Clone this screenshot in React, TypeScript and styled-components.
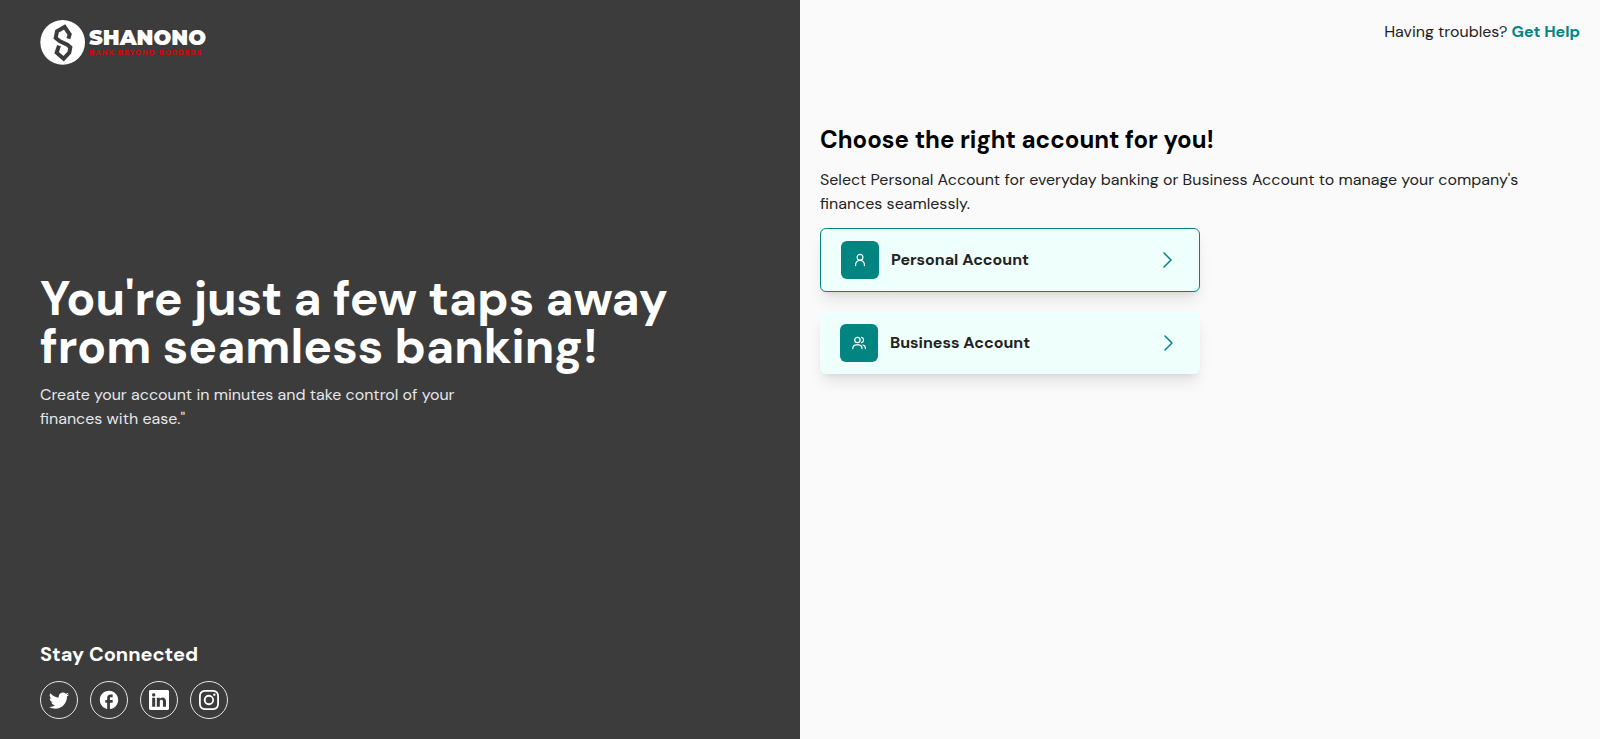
import React, { useState } from "react";
import styled, { createGlobalStyle } from "styled-components";
import { BsInstagram, BsLinkedin, BsTwitter } from "react-icons/bs";
import { MdFacebook } from "react-icons/md";

const teal = "#028581";

const GlobalStyle = createGlobalStyle`
  *, *::before, *::after { box-sizing: border-box; }
  body {
    margin: 0;
    background: #fafafa;
    color: #222;
    font-family: "DM Sans", Inter, "Liberation Sans", sans-serif;
    font-size: 16px;
    line-height: 24px;
  }
  h1, h2, h3, p, ul { margin: 0; padding: 0; }
`;

const Page = styled.div`
  display: grid;
  grid-template-columns: 1fr 1fr;
  min-height: 100vh;

  @media (max-width: 800px) {
    grid-template-columns: 1fr;
  }
`;

const Brand = styled.section`
  display: flex;
  flex-direction: column;
  justify-content: space-between;
  gap: 40px;
  padding: 20px 40px;
  background: #3c3c3c;
  color: #fff;
`;

const LogoLink = styled.a`
  display: flex;
  align-items: center;
  align-self: flex-start;
  gap: 4px;
  padding-bottom: 2px;
  color: #fff;
  text-decoration: none;
`;

const LogoText = styled.span`
  display: flex;
  flex-direction: column;
`;

const LogoName = styled.span`
  font-family: Montserrat, Inter, sans-serif;
  font-size: 21px;
  font-weight: 900;
  line-height: 20px;
`;

const LogoTagline = styled.span`
  color: #d40606;
  font-family: Montserrat, Inter, sans-serif;
  font-size: 7px;
  font-weight: 700;
  letter-spacing: 1px;
  line-height: 10px;
`;

const Hero = styled.div`
  display: flex;
  flex-direction: column;
  gap: 12px;
`;

const HeroTitle = styled.h1`
  font-size: 48px;
  font-weight: 700;
  line-height: 48px;
`;

const HeroText = styled.p`
  max-width: 450px;
  color: #e5e7eb;
`;

const Social = styled.div`
  display: flex;
  flex-direction: column;
  gap: 12px;
`;

const SocialTitle = styled.h3`
  font-size: 20px;
  font-weight: 700;
  line-height: 30px;
`;

const SocialList = styled.ul`
  display: flex;
  gap: 12px;
  list-style: none;
`;

const SocialLink = styled.a`
  display: flex;
  align-items: center;
  justify-content: center;
  width: 38px;
  height: 38px;
  border: 1px solid #e5e7eb;
  border-radius: 50%;
  color: #fff;
`;

const Content = styled.section`
  display: flex;
  flex-direction: column;
  gap: 80px;
  padding: 20px;
`;

const Help = styled.p`
  text-align: right;
`;

const HelpLink = styled.a`
  color: ${teal};
  font-weight: 700;
  text-decoration: none;
`;

const Chooser = styled.main`
  display: flex;
  flex-direction: column;
  gap: 12px;
`;

const ChooserTitle = styled.h2`
  color: #000;
  font-size: 24px;
  font-weight: 700;
  line-height: 32px;
`;

const AccountList = styled.div`
  display: flex;
  flex-direction: column;
  gap: 20px;
  width: 50%;
  min-width: 280px;
`;

const AccountCard = styled.button<{ $active: boolean }>`
  display: flex;
  align-items: center;
  gap: 12px;
  padding: 12px 20px;
  border: ${(p) => (p.$active ? `1px solid ${teal}` : "0")};
  border-radius: 6px;
  background: #effffc;
  box-shadow: 0 10px 15px -3px rgba(0, 0, 0, 0.1), 0 4px 6px -4px rgba(0, 0, 0, 0.1);
  color: #222;
  font: inherit;
  font-weight: 700;
  text-align: left;
  cursor: pointer;
`;

const AccountIcon = styled.span`
  display: flex;
  align-items: center;
  justify-content: center;
  width: 38px;
  height: 38px;
  border-radius: 6px;
  background: ${teal};
  color: #fff;
`;

const AccountName = styled.span`
  flex: 1;
`;

const LogoMark = () => (
  <svg width="45" height="45" viewBox="0 0 135 135" aria-hidden="true">
    <circle cx="68" cy="67" r="67" fill="#fff" />
    <path
      d="M85 56L89 43L74 21L51 34L47 54L60 64L82 74L91 82L88 98L71 116L50 98L57 77"
      fill="none"
      stroke="#3c3c3c"
      strokeWidth="12"
    />
  </svg>
);

const Chevron = () => (
  <svg width="24" height="24" viewBox="0 0 24 24" fill="none" stroke={teal} strokeWidth="1.5" strokeLinecap="round" strokeLinejoin="round" aria-hidden="true">
    <path d="M9 5l7 7-7 7" />
  </svg>
);

const PersonIcon = () => (
  <svg width="16" height="16" viewBox="0 0 16 16" fill="none" stroke="currentColor" strokeWidth="1.2" strokeLinecap="round" aria-hidden="true">
    <circle cx="8" cy="5.2" r="2.9" />
    <path d="M3.6 13.6v-.8a4.4 4.4 0 0 1 8.8 0v.8" />
  </svg>
);

const PeopleIcon = () => (
  <svg width="16" height="16" viewBox="0 0 16 16" fill="none" stroke="currentColor" strokeWidth="1.2" strokeLinecap="round" aria-hidden="true">
    <circle cx="6.4" cy="5" r="2.7" />
    <path d="M1.8 13.6v-.4a3.4 3.4 0 0 1 3.4-3.4h2.4a3.4 3.4 0 0 1 3.4 3.4v.4" />
    <path d="M10.6 2.4a2.7 2.7 0 0 1 0 5.2" />
    <path d="M12 10a3.3 3.3 0 0 1 2.4 3.2v.4" />
  </svg>
);

const accounts = [
  { id: "personal", name: "Personal Account", Icon: PersonIcon },
  { id: "business", name: "Business Account", Icon: PeopleIcon },
];

const networks = [
  { name: "Twitter", Icon: BsTwitter, size: 20 },
  { name: "Facebook", Icon: MdFacebook, size: 22 },
  { name: "LinkedIn", Icon: BsLinkedin, size: 20 },
  { name: "Instagram", Icon: BsInstagram, size: 20 },
];

export default function App() {
  const [selected, setSelected] = useState("personal");

  return (
    <>
      <GlobalStyle />
      <Page>
        <Brand>
          <LogoLink href="#">
            <LogoMark />
            <LogoText>
              <LogoName>SHANONO</LogoName>
              <LogoTagline>BANK BEYOND BORDERS</LogoTagline>
            </LogoText>
          </LogoLink>
          <Hero>
            <HeroTitle>You're just a few taps away from seamless banking!</HeroTitle>
            <HeroText>Create your account in minutes and take control of your finances with ease."</HeroText>
          </Hero>
          <Social>
            <SocialTitle>Stay Connected</SocialTitle>
            <SocialList>
              {networks.map(({ name, Icon, size }) => (
                <li key={name}>
                  <SocialLink href="#" aria-label={name}>
                    <Icon size={size} />
                  </SocialLink>
                </li>
              ))}
            </SocialList>
          </Social>
        </Brand>
        <Content>
          <Help>
            Having troubles? <HelpLink href="#">Get Help</HelpLink>
          </Help>
          <Chooser>
            <ChooserTitle>Choose the right account for you!</ChooserTitle>
            <p>
              Select Personal Account for everyday banking or Business Account to manage your company's finances
              seamlessly.
            </p>
            <AccountList>
              {accounts.map(({ id, name, Icon }) => (
                <AccountCard
                  key={id}
                  type="button"
                  $active={selected === id}
                  aria-pressed={selected === id}
                  onClick={() => setSelected(id)}
                >
                  <AccountIcon>
                    <Icon />
                  </AccountIcon>
                  <AccountName>{name}</AccountName>
                  <Chevron />
                </AccountCard>
              ))}
            </AccountList>
          </Chooser>
        </Content>
      </Page>
    </>
  );
}
